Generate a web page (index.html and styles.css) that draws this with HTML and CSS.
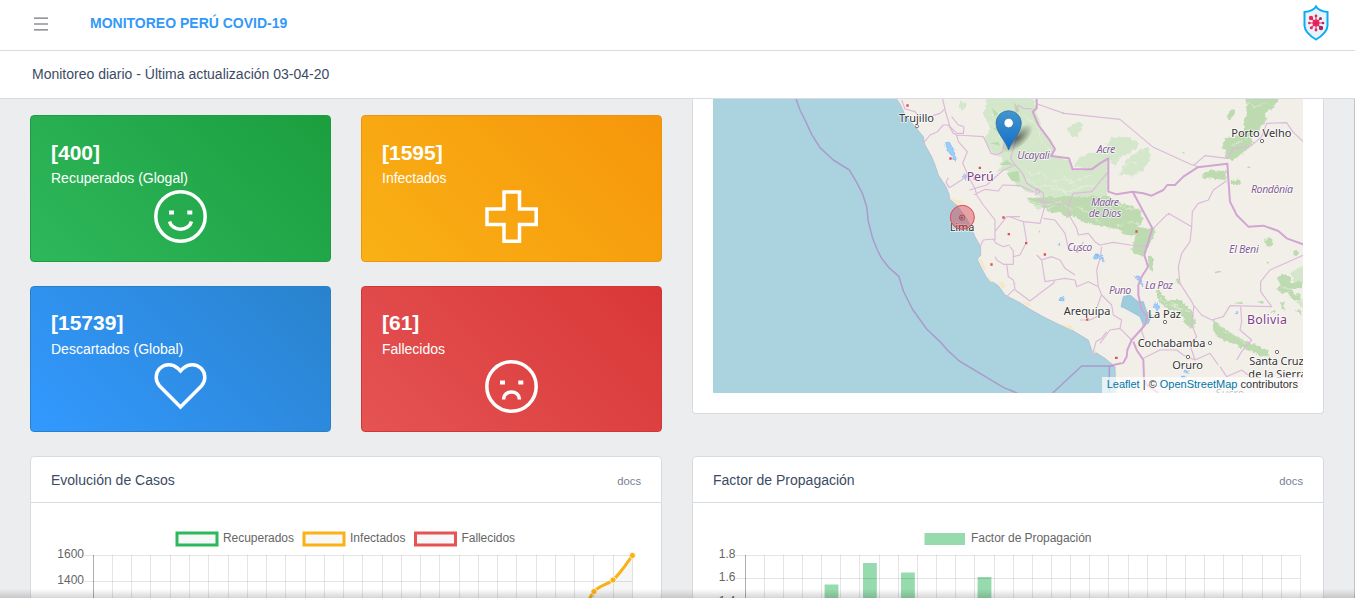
FILE: index.html
```html
<!DOCTYPE html>
<html lang="es">
<head>
<meta charset="utf-8">
<title>Monitoreo Perú COVID-19</title>
<link rel="stylesheet" href="styles.css">
</head>
<body>
<header class="topbar">
  <svg class="menu" width="16" height="16" viewBox="0 0 16 16"><path d="M1 2.200h14M1 13.800h14" stroke="#73757f" stroke-width="1.200"/><path d="M1 8h14" stroke="#73757f" stroke-width="1.200"/></svg>
  <span class="brand">MONITOREO PERÚ COVID-19</span>
  <svg class="logo" width="28" height="38" viewBox="0 0 28 38">
    <path d="M14 2.5C12 6 8 7.5 2.5 8V22C3 28 8 32 14 35.5C20 32 25 28 25.5 22V8C20 7.500 16 6 14 2.500Z" fill="#e6f3fb" stroke="#0bacf5" stroke-width="2"/>
    <g stroke="#e53661" stroke-width="1.1"><path d="M14 12v14M7 19h14M9.500 14.500l9 9M18.500 14.500l-9 9"/></g>
    <circle cx="14" cy="19" r="3.500" fill="#f2235e"/>
    <g fill="#e72559"><circle cx="9" cy="14" r="2.200"/><circle cx="14" cy="12" r="1.400"/><circle cx="7.300" cy="19" r="1.300"/><circle cx="9.300" cy="23.800" r="1.500"/><circle cx="14" cy="26" r="1.400"/></g>
    <g fill="#a12b59"><circle cx="18.500" cy="14.500" r="1.500"/><circle cx="21" cy="19" r="1.300"/><circle cx="19" cy="24" r="2.200"/></g>
    <circle cx="14" cy="19" r="1.300" fill="none" stroke="#a83265" stroke-width=".7"/>
  </svg>
</header>
<div class="subheader">Monitoreo diario - Última actualización 03-04-20</div>
<main class="content">
  <section class="row">
    <div class="stats">
      <article class="stat upper green">
        <div class="value">[400]</div><div class="label">Recuperados (Glogal)</div>
        <svg class="icon" viewBox="0 0 53 53"><circle cx="26.500" cy="26.500" r="24.700" fill="none" stroke="#fff" stroke-width="3.500"/><path d="M15 20.500h5v4h-5zM33.300 20.500h5v4h-5z" fill="#fff"/><path d="M15.500 31.500a11.300 10 0 0 0 22 0" fill="none" stroke="#fff" stroke-width="3.500"/></svg>
      </article>
      <article class="stat upper orange">
        <div class="value">[1595]</div><div class="label">Infectados</div>
        <svg class="icon" viewBox="0 0 53 53"><path d="M19 2h15.500v17h16.700v15.500h-16.700v16.700h-15.500v-16.700h-17v-15.500h17z" fill="none" stroke="#fff" stroke-width="3.500"/></svg>
      </article>
      <article class="stat lower blue">
        <div class="value">[15739]</div><div class="label">Descartados (Global)</div>
        <svg class="icon" viewBox="0 0 53 53"><path d="M26.500 11L23.600 8.100A12.700 12.700 0 0 0 5.600 26L26.500 47L47.400 26A12.700 12.700 0 0 0 29.400 8.100Z" fill="none" stroke="#fff" stroke-width="3.500"/></svg>
      </article>
      <article class="stat lower red">
        <div class="value">[61]</div><div class="label">Fallecidos</div>
        <svg class="icon" viewBox="0 0 53 53"><circle cx="26.500" cy="26.500" r="24.700" fill="none" stroke="#fff" stroke-width="3.500"/><path d="M15 20.500h5v4h-5zM33.300 20.500h5v4h-5z" fill="#fff"/><path d="M18.700 39.500v-1a7.800 6.500 0 0 1 15.600 0v1" fill="none" stroke="#fff" stroke-width="3.500"/></svg>
      </article>
    </div>
    <div class="mapcard">
      <div class="map">
      <svg width="590" height="294" viewBox="69 12 1770 882">
        <defs>
          <linearGradient id="pin" x2="0" y2="1"><stop offset="0" stop-color="#4295cf"/><stop offset="1" stop-color="#126fc6"/></linearGradient>
          <radialGradient id="shade"><stop offset="0" stop-color="#000" stop-opacity=".55"/><stop offset="1" stop-color="#000" stop-opacity="0"/></radialGradient>
          <filter id="ragged" x="-5%" y="-5%" width="110%" height="110%"><feTurbulence type="fractalNoise" baseFrequency=".09" numOctaves="3" seed="4"/><feDisplacementMap in="SourceGraphic" scale="14" xChannelSelector="R" yChannelSelector="G"/></filter>
          <filter id="wiggle" x="-5%" y="-5%" width="110%" height="110%"><feTurbulence type="fractalNoise" baseFrequency=".1" numOctaves="2" seed="9"/><feDisplacementMap in="SourceGraphic" scale="4" xChannelSelector="R" yChannelSelector="G"/></filter>
        </defs>
        <rect x="69" y="12" width="1770" height="882" fill="#aad3df"/>
        <path class="land" d="M610 0L620 12L632 30L645 60L675 95L700 125L705 150L725 185L735 210L745 240L768 275L778 300V312L800 330L830 370L845 400L855 425L872 455V480L862 493L872 515L890 548L925 572L945 600L990 623L1020 643L1065 668L1110 690L1145 705L1195 735L1205 765L1245 790L1275 815L1278 910H1860V0Z"/>
        <g class="sand"><path d="M778 308l18 6 25 4-10 8-15 0zM865 488l12 8 10 25-8 4zM925 562l14-2 8 12-10 10zM995 620l20 2 8 10-12 0zM1110 688l35 6 8 12-10-2zM1204 762l16 6-6 8zM893 550l12 4 6 8-10-2z"/></g>
        <g class="wood-lite" filter="url(#ragged)">
          <path d="M893 0L1030 0L1040 50L1055 100L1085 140L1095 165L1090 185L1137 192L1148 225L1210 223L1253 195V310H1060L1030 295L1005 290L975 265L950 225L925 230L940 190L905 170L893 155L885 130L900 100L880 60Z"/>
          <path d="M1152 215L1165 190L1200 172L1245 165L1262 130L1310 125L1348 142L1340 160L1300 185L1255 195L1215 223Z"/>
          <path d="M1285 245L1305 200L1340 170L1375 155L1384 185L1360 225L1320 245L1300 235Z"/>
          <path d="M1130 100L1165 80L1180 90L1160 125L1140 122ZM810 20l18 4-8 22-14-10zM1245 175l25-12 20 22-15 30zM1010 310l50 0 15 20-30 15z"/>
          <path d="M1800 532l39-20v50l-25 5zM1815 620l24-8v30z"/>
        </g>
        <g class="gaps" filter="url(#ragged)"><path d="M1000 225l30 15 25-8 25 30 45-10 40 25 50-8M1010 250l30 25 55-5 40 30M1000 60l40 30 15 50 40 40M900 80l30 20 30-20 20 50M1120 240l30 20 55-20M1085 280l60 10 50-20M1290 230l30-30 20 6M900 60l40-10 40 20M910 140l30-30 30 20"/></g>
        <g class="wood" filter="url(#ragged)">
          <path d="M1668 0L1770 0L1748 42L1728 50L1730 75L1710 100L1680 125L1690 145L1665 170L1630 195L1605 190L1608 165L1595 155L1605 130L1640 125L1662 105L1660 80L1670 60Z"/>
          <path d="M1610 65L1620 48L1638 42L1630 65L1620 74ZM1540 235L1560 225L1610 228V255L1580 252L1540 250ZM1620 258l32-4v14l-30-2z"/>
          <path d="M1010 308L1150 305L1165 330L1140 350L1135 370L1110 350L1085 355L1050 330L1020 325Z"/>
          <path d="M1140 306L1250 304L1310 330L1350 340L1358 375L1345 395L1380 403L1375 422L1310 420L1275 400L1240 395L1190 385L1160 370L1128 355L1145 335Z"/>
          <path d="M1340 415l50-18 10 15-30 50-12 25-35-20zM1374 480l15 10v40l-14-10z"/>
          <path d="M1397 587l12-5 18 32 48 2 32 35 12 38-20 0-15-15-18-25-30-5-30-25zM1465 545l6 25-12-5zM1478 660l25 12 12 25-18 3-14-20z"/>
          <path d="M1568 672L1590 690L1640 725L1735 765L1738 785L1705 780L1650 755L1600 735L1570 710Z"/>
          <path d="M1760 550l18-15 20 8 8 20 30-5v20l-30 5 5 15 20 0v18l-28-5-8-20-20 5-15-15 12-12zM1722 432l25-2v20l-20 4zM1810 470l12-3 3 12-14 2zM1770 620l12 5 4 20-10-5zM1815 645l20 2v14zM1740 650l12-5 2 12z"/>
        </g>
        <g class="gaps woodgaps" filter="url(#ragged)"><path d="M1020 320l50 10 40-10 35 25M1070 345l30-18M1160 335l40 20 30 30M1260 315l45 25 45 5M1280 395l35-15 40 10M1410 610l25 20 45 10M1440 620l30 25 30 5M1600 710l35 10 30 25M1665 20l30 15 35-10M1620 150l40-10 20-18M1770 575l40 10"/></g>
        <g class="specks" filter="url(#wiggle)"><path d="M905 40l20 15-10 10zM955 80l15-20 10 25zM900 145l25-5 5 12zM930 210l20-15 20 15zM950 235l35-8 5 35-25-5zM970 20l20 25-12 10zM910 100l30-10-10 25zM1120 50l5 5-5 4zM1475 170l8 1v7zM1670 220l7-7 5 5zM1575 530l15-3 5 4-20 4zM1700 620l20-3v10zM1630 625l25-5 5 7zM1045 410l5-5v8zM1730 500l8 1-6 7z"/></g>
        <path d="M1300 605L1320 600L1345 620L1360 620L1370 650L1385 660L1375 685L1360 690L1350 665L1320 648L1305 640L1293 635Z" fill="#9dccdd" stroke="#8cb8d8" stroke-width="2" filter="url(#wiggle)"/>
        <g class="lake" filter="url(#ragged)"><path d="M767 142l12 0 10 20 6 15 4 20-10-3-8-18-10-6zM822 235l8 8-2 10-8-5zM1208 488l12-8 18 4 5 18-10-10-20 0zM1332 545l13-3 10 15 5 18-8-8-8-11zM1390 630l10-5 10 10-5 16-8-10zM1110 607h12v10h-12zM1102 445h7v7h-7zM1480 830l18-5-5 10zM1475 843h12v3h-12zM1636 653h6v3h-6zM1218 477h6v6h-6z"/></g>
        <g class="thin" filter="url(#wiggle)">
          <path d="M635 15L645 42L675 50L692 70L710 68L750 55L765 42L755 0M765 45L780 95L800 115L820 115L822 95L805 90L785 65M700 145L720 120L740 112L760 90L775 90L790 115L800 120L880 125L885 135L903 175L920 180L938 170L945 120L965 100L975 60L985 30L1000 40L1028 42M800 120L805 140L832 170L818 205L832 235L815 255L778 278L768 262L775 248M832 240L855 280L860 300L880 330L915 375L915 410L950 365L990 365M852 300L885 283L925 288L938 270L990 272L1030 290M838 285L890 270L940 225L975 210M870 455L880 435L910 432L918 445L940 455L960 450M915 380L915 435M983 115L962 190L975 210L990 225L1000 240L1010 265L1050 290L1035 300M915 485L920 495L940 508L970 508V468L960 455M950 508L955 545L970 555L975 580L950 605M975 584L1020 618L1050 595L1090 565L1095 555L1065 560L1055 495L1040 480M1095 555L1125 550L1155 555L1160 575L1195 560L1225 575M1225 575L1220 525L1230 490L1235 455M1055 495L1085 485L1110 495L1125 520L1155 540"/>
          <path d="M1035 295L1040 280L1060 295L1060 320L1135 330L1150 295L1205 290L1255 230M1135 330L1140 365L1160 400L1165 420L1195 415L1215 440L1230 450L1270 442L1320 450L1375 455M1045 310L1065 330L1060 350L1050 385L1000 380L985 375L960 365M1060 370L1095 375L1125 415L1135 460L1165 470L1180 440M1000 380L1010 440L990 480L970 485M1225 575L1235 600L1265 630L1270 660L1295 675M1235 598L1220 640M1295 675L1290 700L1325 735M1290 700L1260 705L1230 745M1205 790L1218 740L1235 730L1250 710M1170 675L1200 675L1240 655"/>
          <path d="M1042 27L1122 55L1290 73L1390 157L1500 207L1523 215M1512 210L1545 182L1612 190L1630 160L1680 155L1715 125L1730 85L1790 83L1808 110L1850 150M1390 400L1435 355L1505 395L1507 350L1525 325L1555 315L1570 285L1610 257M1505 395L1500 440L1475 475L1465 515L1470 565L1505 620L1510 630L1535 660L1565 675L1600 665L1620 632L1745 635L1712 590V560L1740 525L1850 476M1652 635L1655 680L1650 705L1685 735L1655 770L1640 795M1512 630L1505 690L1520 725L1500 750L1515 795M1360 790L1410 765L1460 765L1480 780L1515 795L1560 775L1585 810M1590 815L1610 845L1655 825L1675 840M1360 685L1355 710L1365 735"/>
        </g>
        <g class="country" filter="url(#wiggle)">
          <path d="M1040 0L1040 40L1028 50L1045 90L1075 130L1095 162L1083 183L1137 190L1148 223L1205 223L1230 205L1255 190V290L1280 298L1328 290L1360 295L1385 302L1420 285L1432 270L1455 270L1480 245L1523 217L1612 206L1615 250L1620 320L1640 360L1675 395L1720 392L1765 408L1790 430L1850 452"/>
          <path d="M1328 290L1387 400L1375 440L1363 480L1374 515L1355 545L1345 570V600L1355 645L1372 665L1365 690L1325 735L1312 765L1310 785L1300 803L1260 812M1330 740L1340 765L1360 795L1362 850L1370 870L1405 894"/>
        </g>
        <path class="marine" d="M318 12L330 45L345 75L365 118L390 158L430 195L478 225L500 262L517 295L530 335L535 380L548 430L562 465L575 490L597 518L627 545L640 588L667 642L710 702L752 742L770 763L808 798L870 835L940 877L980 894M960 885L985 896M1088 894L1175 813H1270M1258 813V894"/>
        <g fill="#e05252"><path d="M649 28h7v7h-7zM778 187h7v7h-7zM866 215h7v7h-7zM851 247h8v8h-8zM937 364h7v7h-7zM953 414h7v7h-7zM1005 441h7v7h-7zM1061 475h7v7h-7zM1158 465h7v7h-7zM1336 406h7v7h-7zM901 505h7v7h-7zM1188 669h7v8h-7zM1275 785h8v7h-8z"/></g>
        <g class="places"><circle cx="681" cy="94" r="4.500"/><circle cx="1716" cy="138" r="5"/><circle cx="1425" cy="681" r="5"/><circle cx="1560" cy="744" r="5"/><circle cx="1494" cy="786" r="5"/><circle cx="1761" cy="771" r="5"/></g>
        <g class="city">
          <text x="627" y="81" textLength="105">Trujillo</text><text x="779" y="409" textLength="74">Lima</text>
          <text x="1624" y="126" textLength="180">Porto Velho</text><text x="1121" y="661" textLength="140">Arequipa</text><text x="1375" y="668" textLength="98">La Paz</text><text x="1343" y="757" textLength="203">Cochabamba</text><text x="1447" y="823" textLength="92">Oruro</text><text x="1678" y="810" textLength="163">Santa Cruz</text><text x="1675" y="850" textLength="175">de la Sierra</text><text x="1577" y="905" textLength="85">Sucre</text>
        </g>
        <g class="nation"><text x="830" y="257" textLength="81">Perú</text><text x="1671" y="686" textLength="120">Bolivia</text></g>
        <g class="region"><text x="982" y="192" textLength="97">Ucayali</text><text x="1220" y="175" textLength="56">Acre</text><text x="1203" y="332" textLength="84">Madre</text><text x="1196" y="367" textLength="98">de Dios</text><text x="1132" y="469" textLength="75">Cusco</text><text x="1683" y="294" textLength="126">Rondônia</text><text x="1617" y="473" textLength="89">El Beni</text><text x="1257" y="597" textLength="67">Puno</text><text x="1365" y="582" textLength="84">La Paz</text></g>
        <circle cx="817" cy="367" r="36" fill="#dc3545" fill-opacity=".42" stroke="#dd4a50" stroke-width="3"/>
        <circle cx="816" cy="368" r="8" fill="none" stroke="#863a42" stroke-width="2"/><circle cx="815" cy="368" r="3.500" fill="#c8323c"/>
        <ellipse cx="983" cy="130" rx="58" ry="26" fill="url(#shade)" transform="rotate(-42 983 130)"/>
        <path d="M956 165C948 139 918 113 918 84A38 37 0 0 1 994 84C994 113 964 139 956 165Z" fill="url(#pin)" stroke="#2e6c9f" stroke-width="2"/><circle cx="956" cy="84" r="14" fill="#fff" stroke="#2b72a8" stroke-width="2"/>
      </svg>
      <div class="attribution"><a>Leaflet</a> | © <a>OpenStreetMap</a> contributors</div>
      </div>
    </div>
  </section>
  <section class="row charts">
    <article class="card">
      <div class="cardhead"><span>Evolución de Casos</span><small>docs</small></div>
      <svg id="cases" class="chart" width="630" height="95" viewBox="31 503 630 95">
        <g class="legend"><rect x="177" y="533" width="40" height="12" stroke="#2eb85c"/><rect x="304" y="533" width="40" height="12" stroke="#f9b115"/><rect x="415.500" y="533" width="40" height="12" stroke="#e55353"/></g>
        <g class="charttext"><text x="223" y="542" textLength="71">Recuperados</text><text x="350" y="542" textLength="55.500">Infectados</text><text x="461.500" y="542" textLength="53.500">Fallecidos</text><text x="84" y="558" text-anchor="end">1600</text><text x="84" y="584" text-anchor="end">1400</text></g>
        <g class="grid"></g>
        <path d="M587 604L594 591.500C600 585 607 585 613 580C620 574 625 566 632.400 555.500V604Z" fill="#000" fill-opacity=".035"/>
        <path d="M587 604C590 598 591 595 594 591.500C600 585 607 585 613 580C620 574 625 566 632.400 555.500" fill="none" stroke="#f9b115" stroke-width="3"/>
        <g fill="#f9b115" stroke="#fff" stroke-width=".7"><circle cx="594" cy="591.500" r="3"/><circle cx="613" cy="580" r="3"/><circle cx="632.400" cy="555.500" r="3"/></g>
      </svg>
    </article>
    <article class="card">
      <div class="cardhead"><span>Factor de Propagación</span><small>docs</small></div>
      <svg id="factor" class="chart" width="630" height="95" viewBox="693 503 630 95">
        <rect x="924.500" y="533" width="40.500" height="12" fill="#96dbad"/>
        <g class="charttext"><text x="971" y="542" textLength="120.500">Factor de Propagación</text><text x="735.500" y="558" text-anchor="end">1.8</text><text x="735.500" y="581" text-anchor="end">1.6</text><text x="735.500" y="605" text-anchor="end">1.4</text></g>
        <g fill="#96dbad"><path d="M824.600 584.500h13.800V600h-13.800zM863 563h13.800v37h-13.800zM901 572.500h13.800V600h-13.800zM977.600 577h13.800v23h-13.800z"/></g>
        <g class="grid"></g>
      </svg>
    </article>
  </section>
</main>
<div class="fade"></div>
<script src="charts.js"></script>
</body>
</html>
```

FILE: styles.css
```css
* { box-sizing: border-box; }
body { margin: 0; height: 598px; overflow: hidden; display: flex; flex-direction: column; background: #ebedef; color: #3c4b64; font: 14px/21px "Liberation Sans", Arial, sans-serif; }
svg { display: block; }
.topbar { height: 51px; flex: none; display: flex; align-items: flex-start; background: #fff; border-bottom: 1px solid #d8dbe0; padding: 0 25px 0 33px; }
.menu { margin-top: 16px; }
.brand { margin: 13px auto 0 41px; color: #3399f8; font-weight: 700; }
.logo { margin-top: 4px; }
.subheader { height: 48px; flex: none; background: #fff; border-bottom: 1px solid #d8dbe0; padding: 13px 32px 0; }
.content { flex: 1; min-height: 0; overflow: hidden; border-right: 1px solid #c5c3c0; padding: 0 30px; }
.row { display: grid; grid-template-columns: 632px 632px; column-gap: 30px; }
.stats { display: grid; grid-template-columns: 301px 301px; grid-template-rows: 147px 146px; gap: 24px 30px; padding-top: 16px; }
.stat { border: 1px solid; border-radius: 4px; padding: 20px; color: #fff; }
.upper { padding-top: 21px; }
.green { background: linear-gradient(45deg, #2eb85c, #1b9e3e); border-color: #1e9d40; }
.orange { background: linear-gradient(45deg, #f9b115, #f6960b); border-color: #f0940e; }
.blue { background: linear-gradient(45deg, #39f, #2982cc); border-color: #2a80c8; }
.red { background: linear-gradient(45deg, #e55353, #d93737); border-color: #d23636; }
.value { font-size: 21px; line-height: 31px; font-weight: 700; }
.label { line-height: 21px; }
.lower .label { margin-top: 1px; }
.icon { width: 53px; height: 53px; margin: 1.3px auto 0; }
.lower .icon { margin-top: .4px; }
.mapcard { height: 315px; background: #fff; border: 1px solid #d8dbe0; border-top: 0; border-radius: 0 0 4px 4px; padding: 0 20px; }
.map { position: relative; height: 294px; overflow: hidden; }
.attribution { position: absolute; right: 0; bottom: 0; height: 16px; padding: 0 5px; font-size: 11px; line-height: 15px; color: #333; background: rgba(255,255,255,.7); white-space: nowrap; }
.attribution a { color: #0078a8; }
.charts { padding-top: 24px; }
.card { height: 180px; background: #fff; border: 1px solid #d8dbe0; border-radius: 4px; }
.cardhead { height: 46px; border-bottom: 1px solid #d8dbe0; padding: 13px 20px 0; display: flex; justify-content: space-between; }
.cardhead small { font-size: 11.2px; line-height: 22px; color: #768192; }
.fade { position: absolute; left: 0; right: 0; bottom: 0; height: 9px; background: linear-gradient(transparent, rgba(0,0,0,.16)); }
.charttext { font-size: 12px; fill: #666; }
.legend rect { fill: #f8f8f8; stroke-width: 3; }
.grid { stroke: #000; stroke-opacity: .1; shape-rendering: crispEdges; }
.grid .axis { stroke-opacity: .32; }
.land { fill: #f2efe9; stroke: #a9b5cc; stroke-width: 2; }
.sand { fill: #f5e8c4; }
.wood-lite { fill: #d4e7cb; }
.wood { fill: #bddab1; }
.specks { fill: #b9dbad; }
.gaps { fill: none; stroke: #e5eddc; stroke-width: 3; }
.woodgaps { stroke: #dde8d0; }
.lake { fill: #9bcdf8; stroke: #73b4f2; stroke-width: 1.5; }
.thin, .country, .marine { fill: none; stroke-linejoin: round; }
.thin { stroke: #dcbada; stroke-width: 3.5; }
.country { stroke: #d3a5d2; stroke-width: 6; }
.marine { stroke: #aa9bcb; stroke-width: 4.5; }
.places { fill: #fff; stroke: #555; stroke-width: 2.5; }
.city, .nation, .region { font-family: "Noto Sans", sans-serif; stroke: #fff; stroke-opacity: .75; stroke-width: 5; stroke-linejoin: round; paint-order: stroke; }
.city { font-size: 33px; fill: #333; }
.nation { font-size: 37px; fill: #7e3f88; }
.region { font-size: 32px; font-style: italic; fill: #835b96; }
```

FILE: charts.js
```js
// Draws the axis and the grid lines of a chart.
function drawGrid(id, left, right, steps, rows) {
  const group = document.querySelector('#' + id + ' .grid');
  const line = (x1, y1, x2, y2, cls) => {
    const el = document.createElementNS('http://www.w3.org/2000/svg', 'line');
    Object.entries({ x1, y1, x2, y2 }).forEach(([k, v]) => el.setAttribute(k, v));
    if (cls) el.setAttribute('class', cls);
    group.appendChild(el);
  };
  for (let i = 0; i <= steps; i++) {
    const x = Math.floor(left + (right - left) * i / steps) + 0.5;
    line(x, 555, x, 600, i ? '' : 'axis');
  }
  rows.forEach(y => line(left - 9, y, right, y));
}
drawGrid('cases', 93.2, 632.4, 28, [555.5, 581.5]);
drawGrid('factor', 745.1, 1300.4, 29, [555.5, 578.5]);
```
